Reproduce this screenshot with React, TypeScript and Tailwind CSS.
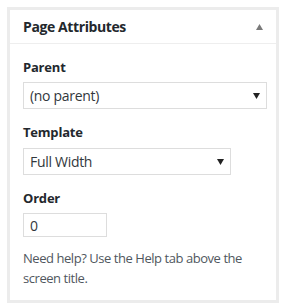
import React from "react";

const Caret = ({ up = false, color = "#222" }: { up?: boolean; color?: string }) => (
  <svg width="7" height="6" viewBox="0 0 7 6" className="block">
    {up ? (
      <polygon points="3.5,0 7,6 0,6" fill={color} />
    ) : (
      <polygon points="0,0 7,0 3.5,6" fill={color} />
    )}
  </svg>
);

export default function App() {
  return (
    <div
      className="w-[286px] h-[308px] bg-white p-[7px]"
      style={{ fontFamily: '"Open Sans", "Noto Sans", sans-serif' }}
    >
      <div className="h-[296px] border-[3px] border-[#ececec] bg-white flex flex-col">
        <div className="h-[34px] border-b border-[#eeeeee] flex items-center justify-between pl-[13px] pr-[13px]">
          <span className="text-[14px] font-bold text-[#23282d] tracking-[-0.4px]">Page Attributes</span>
          <Caret up color="#7a7a7a" />
        </div>
        <div className="pl-[13px] pr-[10px] pt-[14px] flex flex-col text-[#23282d]">
          <div className="text-[13px] leading-[18px] font-bold tracking-[-0.2px]">Parent</div>
          <div className="mt-[6px] w-[244px] h-[27px] border border-[#dddddd] flex items-center justify-between pl-[6px] pr-[6px] text-[14px] text-[#32373c]">
            <span className="tracking-[-0.3px]">(no parent)</span>
            <Caret />
          </div>
          <div className="mt-[14px] text-[13px] leading-[18px] font-bold tracking-[-0.2px]">Template</div>
          <div className="mt-[7px] w-[208px] h-[27px] border border-[#dddddd] flex items-center justify-between pl-[6px] pr-[6px] text-[14px] text-[#32373c]">
            <span className="tracking-[-0.3px]">Full Width</span>
            <Caret />
          </div>
          <div className="mt-[14px] text-[13px] leading-[18px] font-bold tracking-[-0.2px]">Order</div>
          <div className="mt-[6px] w-[84px] h-[24px] border border-[#dddddd] flex items-center pl-[6px] text-[14px] text-[#32373c]">
            0
          </div>
          <p className="mt-[11px] text-[13px] leading-[20px] text-[#50575e] tracking-[-0.45px] w-[235px]">
            Need help? Use the Help tab above the screen title.
          </p>
        </div>
      </div>
    </div>
  );
}
